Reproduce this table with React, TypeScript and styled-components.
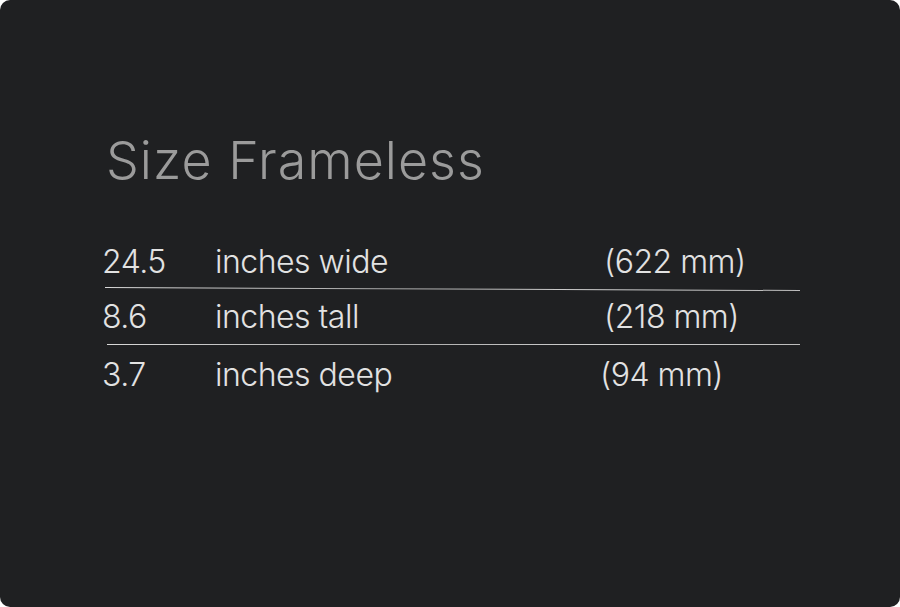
import React from "react";
import styled, { createGlobalStyle } from "styled-components";

const Global = createGlobalStyle`
  html, body { margin: 0; padding: 0; background: #ffffff; }
  #root { width: 900px; height: 607px; }
`;

const Card = styled.div`
  box-sizing: border-box;
  width: 900px;
  height: 607px;
  background: #1f2022;
  border-radius: 10px;
  padding: 131px 0 0 102px;
  font-family: Inter, "Liberation Sans", sans-serif;
  font-weight: 300;
`;

const Title = styled.h1`
  margin: 0 0 0 4px;
  font-size: 52px;
  line-height: 60px;
  font-weight: 300;
  color: #9b9b9b;
  letter-spacing: 1px;
`;

const Table = styled.div`
  margin-top: 44px;
  width: 700px;
  display: flex;
  flex-direction: column;
`;

const Row = styled.div<{ $h: number }>`
  display: grid;
  grid-template-columns: 113px 389px auto;
  align-items: center;
  height: ${(p) => p.$h}px;
  font-size: 32px;
  color: #e2e2e2;
  letter-spacing: -0.5px;
`;

const Cell = styled.span<{ $shift?: number }>`
  margin-left: ${(p) => p.$shift ?? 0}px;
  white-space: nowrap;
`;

const Rule = styled.div<{ $inset: number; $tilt: number }>`
  height: 1px;
  margin-left: ${(p) => p.$inset}px;
  width: ${(p) => 698 - p.$inset}px;
  background: linear-gradient(90deg, #d8d8d8, #a9a9a9 40%, #cfcfcf 70%, #bdbdbd);
  transform: rotate(${(p) => p.$tilt}deg);
  transform-origin: left center;
`;

const rows = [
  { n: "24.5", label: "inches wide", mm: "(622 mm)", shift: 0, h: 52 },
  { n: "8.6", label: "inches tall", mm: "(218 mm)", shift: 0, h: 56 },
  { n: "3.7", label: "inches deep", mm: "(94 mm)", shift: -4, h: 58 },
];

export default function App() {
  return (
    <>
      <Global />
      <Card>
        <Title>Size Frameless</Title>
        <Table>
          {rows.map((r, i) => (
            <React.Fragment key={r.n}>
              <Row $h={r.h}>
                <Cell>{r.n}</Cell>
                <Cell>{r.label}</Cell>
                <Cell $shift={r.shift}>{r.mm}</Cell>
              </Row>
              {i < rows.length - 1 && <Rule $inset={i === 0 ? 3 : 5} $tilt={i === 0 ? 0.25 : 0} />}
            </React.Fragment>
          ))}
        </Table>
      </Card>
    </>
  );
}
